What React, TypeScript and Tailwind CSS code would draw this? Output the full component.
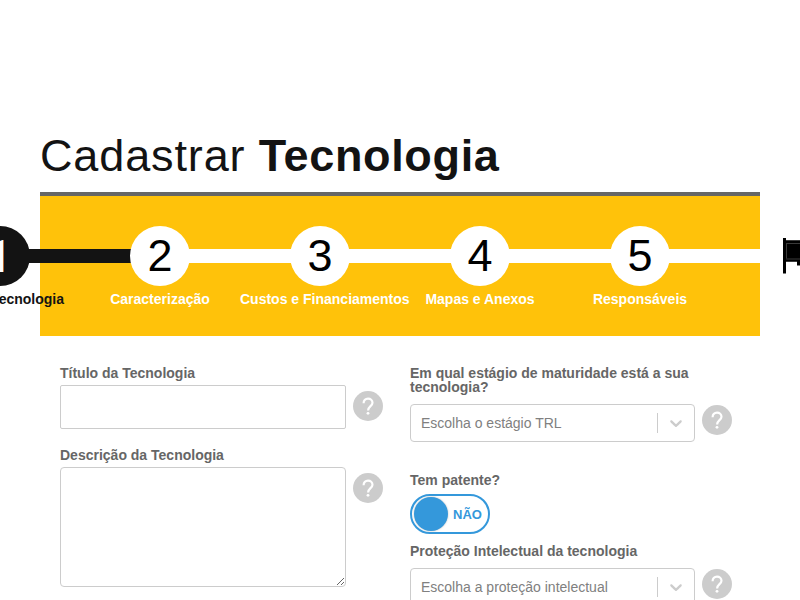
const steps = ["Sobre a Tecnologia", "Caracterização", "Custos e Financiamentos", "Mapas e Anexos", "Responsáveis"];

function Help() {
  return (
    <svg viewBox="0 0 36 36" className="size-9 shrink-0">
      <circle cx="18" cy="18" r="15" fill="#cccccc" />
      <path
        d="M13.6 15.2c0-2.8 1.9-4.6 4.4-4.6s4.5 1.8 4.5 4.2c0 3.2-4.4 3.7-4.4 7.7"
        fill="none"
        stroke="#fff"
        strokeWidth="2.2"
      />
      <circle cx="18" cy="25.3" r="1.4" fill="#fff" />
    </svg>
  );
}

function Step({ n, label }: { n: number; label: string }) {
  const active = n === 1;
  return (
    <div className="flex w-40 shrink-0 flex-col">
      <div className="flex h-[60px] items-center">
        <div className={`h-3.5 grow ${active ? "bg-transparent" : n === 2 ? "bg-[#131313]" : "bg-white"}`} />
        <div
          className={`-mx-px flex size-[60px] shrink-0 items-center justify-center rounded-full text-[45px] leading-none ${
            active ? "bg-[#131313] font-[Roboto,sans-serif] text-white" : "bg-white pb-0.5 text-black"
          }`}
        >
          {n}
        </div>
        <div className={`h-3.5 grow ${active ? "bg-[#131313]" : "bg-white"}`} />
      </div>
      <div
        className={`mt-1.5 text-center text-sm leading-[14px] font-bold whitespace-nowrap ${
          active ? "text-[#131313]" : "text-white"
        }`}
      >
        {label}
      </div>
    </div>
  );
}

function Select({ text }: { text: string }) {
  return (
    <div className="flex h-[38px] w-[285px] shrink-0 items-center rounded border border-[#cccccc] bg-white text-sm text-[#808080]">
      <span className="grow pl-2.5">{text}</span>
      <span className="h-5 w-px bg-[#cccccc]" />
      <svg viewBox="0 0 20 20" className="mx-2 size-5 fill-[#cccccc]">
        <path d="M4.516 7.548c0.436-0.446 1.043-0.481 1.576 0l3.908 3.747 3.908-3.747c0.533-0.481 1.141-0.446 1.574 0 0.436 0.445 0.408 1.197 0 1.615-0.406 0.418-4.695 4.502-4.695 4.502-0.217 0.223-0.502 0.335-0.787 0.335s-0.57-0.112-0.789-0.335c0 0-4.287-4.084-4.695-4.502s-0.436-1.17 0-1.615z" />
      </svg>
    </div>
  );
}

export default function App() {
  return (
    <div className="h-[600px] w-[800px] overflow-hidden bg-white px-10 font-['Liberation_Sans',Arial,sans-serif]">
      <h1 className="h-[192px] pt-[130px] text-[45px] leading-[52px] tracking-[0.87px] whitespace-nowrap text-[#131313]">
        Cadastrar <b className="tracking-[0.65px]">Tecnologia</b>
      </h1>
      <div className="h-36 border-t-4 border-[#666666] bg-[#ffc20a] pt-[30px]">
        <div className="-ml-[120px] flex w-[960px]">
          {steps.map((label, i) => (
            <Step key={label} n={i + 1} label={label} />
          ))}
          <div className="flex h-[60px] w-40 shrink-0 items-center">
            <div className="h-3.5 w-10 bg-white" />
            <svg viewBox="0 0 36 36" className="ml-[22px] size-9">
              <path d="M1 0h3v2h18v5.5h12l-5 10 5 10H15V23.5H4v12H1z" />
              <path d="M4 2.5h18M4.5 5.5V20.5M4 5.5h18M4 21h18M4 23.5h11" fill="none" stroke="#3a3a3a" strokeWidth="1" />
            </svg>
          </div>
        </div>
      </div>
      <div className="flex gap-[14px] px-5 pt-[30px] text-sm leading-[14px] font-bold text-[#666666]">
        <div className="w-[336px] shrink-0">
          <label className="block">Título da Tecnologia</label>
          <div className="mt-[5px] flex">
            <input className="h-11 w-[286px] rounded-xs border border-[#cccccc]" />
            <div className="ml-1 pt-[3px]">
              <Help />
            </div>
          </div>
          <label className="mt-[19px] block">Descrição da Tecnologia</label>
          <div className="mt-[5px] flex">
            <textarea className="h-[120px] w-[286px] rounded border border-[#cccccc]" />
            <div className="ml-1 pt-[3px]">
              <Help />
            </div>
          </div>
        </div>
        <div className="w-[326px] shrink-0">
          <label className="block w-[300px]">Em qual estágio de maturidade está a sua tecnologia?</label>
          <div className="mt-[8px] flex items-start font-normal">
            <div className="pt-[2px]"><Select text="Escolha o estágio TRL" /></div>
            <div className="ml-[4.25px]"><Help /></div>
          </div>
          <label className="mt-[31px] block">Tem patente?</label>
          <div className="mt-[7px] flex h-10 w-20 items-center rounded-full border-2 border-[#3498db] pl-0.5 text-[#3498db]">
            <span className="size-[34px] rounded-full bg-[#3498db] shadow-[0_0_2px_#bbb]" />
            <span className="mt-px ml-[5px] text-[13px]">NÃO</span>
          </div>
          <label className="mt-[10px] block">Proteção Intelectual da tecnologia</label>
          <div className="mt-[8px] flex items-start font-normal">
            <div className="pt-[2px]"><Select text="Escolha a proteção intelectual" /></div>
            <div className="ml-[4.25px]"><Help /></div>
          </div>
        </div>
      </div>
    </div>
  );
}
